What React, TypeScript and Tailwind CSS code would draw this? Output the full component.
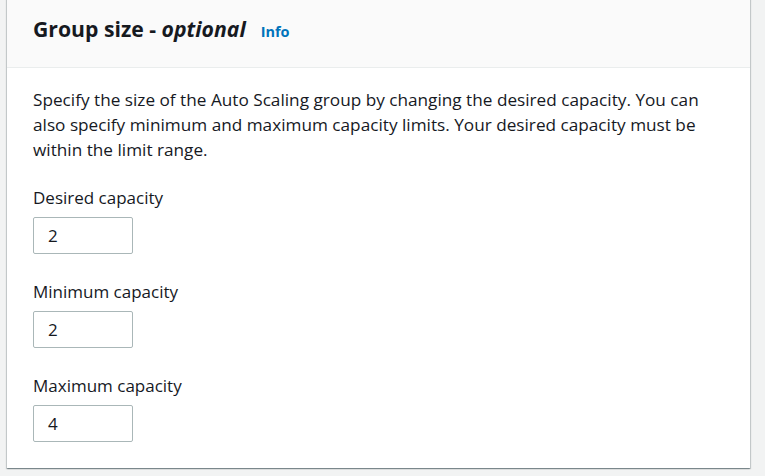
export default function App() {
  const fields = [
    { label: "Desired capacity", value: "2" },
    { label: "Minimum capacity", value: "2" },
    { label: "Maximum capacity", value: "4" },
  ];

  return (
    <div
      className="w-[765px] h-[476px] overflow-hidden bg-[#f2f3f3] pl-[7px] pr-[15px]"
      style={{ fontFamily: '"Open Sans", "Noto Sans", Arial, sans-serif' }}
    >
      <div className="-mt-[20px] h-[488px] bg-white shadow-[0_1px_1px_0_rgba(0,28,36,0.3),1px_1px_1px_0_rgba(0,28,36,0.15),-1px_1px_1px_0_rgba(0,28,36,0.15)]">
        {/* Header */}
        <div className="h-[88px] bg-[#fafafa] border-b border-[#eaeded] pt-[34px] pl-[26px] flex items-baseline">
          <h2 className="text-[21.2px] font-bold text-[#16191f] leading-[30px]">
            Group size - <em className="font-bold italic">optional</em>
          </h2>
          <a className="ml-[15px] text-[14.5px] font-bold text-[#0073bb]">Info</a>
        </div>

        {/* Body */}
        <div className="pl-[26px] pr-[20px] pt-[19px] text-[17px] text-[#16191f]">
          <p className="leading-[25px] text-[17.2px]">
            Specify the size of the Auto Scaling group by changing the desired capacity. You can
            <br />
            also specify minimum and maximum capacity limits. Your desired capacity must be
            <br />
            within the limit range.
          </p>
          <div className="mt-[23px] flex flex-col gap-[25px]">
            {fields.map((f) => (
              <div key={f.label}>
                <div className="leading-[25px]">{f.label}</div>
                <div className="mt-[7px] w-[100px] h-[37px] border border-[#aab7b8] rounded-[2px] flex items-center pl-[14px] bg-white">
                  {f.value}
                </div>
              </div>
            ))}
          </div>
        </div>
      </div>
    </div>
  );
}
